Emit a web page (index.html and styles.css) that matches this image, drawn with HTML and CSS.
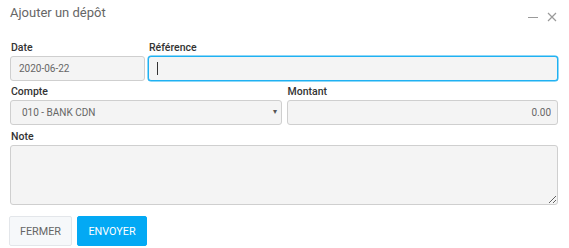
FILE: index.html
```html
<!DOCTYPE html>
<html lang="fr">
<head>
    <meta charset="UTF-8">
    <meta name="viewport" content="width=device-width, initial-scale=1.0">
    <title>Ajouter un dépôt</title>
    <link rel="stylesheet" href="styles.css">
</head>
<body>
    <div class="dialog">
        <div class="dialog-header">
            <h2 class="dialog-title">Ajouter un dépôt</h2>
            <div class="dialog-tools">
                <span class="tool-min"></span>
                <svg class="tool-close" width="10" height="10" viewBox="0 0 10 10">
                    <path d="M1 1L9 9M9 1L1 9" stroke="#9a9a9a" stroke-width="1.2" fill="none"/>
                </svg>
            </div>
        </div>

        <form class="dialog-form">
            <div class="row row-date">
                <div class="field">
                    <label for="date">Date</label>
                    <input type="text" id="date" value="2020-06-22" readonly>
                </div>
                <div class="field">
                    <label for="reference">Référence</label>
                    <div class="input-wrap">
                        <input type="text" id="reference" class="focused">
                        <span class="caret"></span>
                    </div>
                </div>
            </div>
            <div class="row row-half">
                <div class="field">
                    <label for="account">Compte</label>
                    <div class="select-wrap">
                        <select id="account">
                            <option>010 - BANK CDN</option>
                        </select>
                        <span class="select-arrow">&#9662;</span>
                    </div>
                </div>
                <div class="field">
                    <label for="amount">Montant</label>
                    <input type="text" id="amount" class="amount" value="0.00">
                </div>
            </div>
            <div class="field">
                <label for="note">Note</label>
                <textarea id="note"></textarea>
            </div>

            <div class="actions">
                <button type="button" class="btn btn-close">Fermer</button>
                <button type="button" class="btn btn-send">Envoyer</button>
            </div>
        </form>
    </div>
</body>
</html>
```

FILE: styles.css
```css
body {
    margin: 0;
    font-family: Roboto, "Liberation Sans", Arial, sans-serif;
    background: #fff;
}
.dialog {
    padding: 0 11px 0 10px;
}
.dialog-header {
    display: flex;
    justify-content: space-between;
    align-items: flex-start;
    height: 40px;
    padding-top: 3px;
    box-sizing: border-box;
}
.dialog-title {
    margin: 0 0 0 0;
    font-size: 13px;
    font-weight: 400;
    line-height: 20px;
    color: #666;
}
.dialog-tools {
    display: flex;
    align-items: center;
    gap: 9px;
    margin-top: 9px;
    margin-right: 1px;
}
.tool-min {
    display: block;
    width: 10px;
    height: 1px;
    background: #9a9a9a;
}
.tool-close {
    display: block;
}
.row {
    display: grid;
    margin-bottom: 3px;
}
.row-date {
    grid-template-columns: 135px 1fr;
    gap: 3px;
}
.row-half {
    grid-template-columns: 1fr 1fr;
    gap: 5px;
    margin-bottom: 4px;
}
label {
    display: block;
    font-size: 10.5px;
    font-weight: 500;
    line-height: 15px;
    margin-bottom: 1px;
    padding-left: 1px;
    color: #333;
}
input[type="text"],
select,
textarea {
    display: block;
    width: 100%;
    height: 25px;
    box-sizing: border-box;
    margin: 0;
    padding: 0 8px;
    border: 1px solid #cfcfcf;
    border-radius: 3px;
    background: #f4f4f4;
    font-family: Roboto, "Liberation Sans", Arial, sans-serif;
    font-size: 10px;
    color: #666;
    outline: none;
}
input.focused {
    border-color: #1fb1f2;
    box-shadow: 0 0 0 0.5px #1fb1f2;
}
.input-wrap,
.select-wrap {
    position: relative;
}
.caret {
    position: absolute;
    left: 9px;
    top: 6px;
    width: 1px;
    height: 13px;
    background: #333;
}
select {
    appearance: none;
    -webkit-appearance: none;
    padding-left: 11px;
}
.select-arrow {
    position: absolute;
    right: 5px;
    top: 7px;
    font-size: 8px;
    color: #555;
    pointer-events: none;
}
input.amount {
    text-align: right;
    padding-right: 6px;
}
textarea {
    height: 60px;
    resize: vertical;
}
.actions {
    display: flex;
    gap: 5px;
    margin-top: 11px;
    margin-left: -1px;
}
.btn {
    height: 30px;
    border: 1px solid #e3e6ea;
    border-radius: 2px;
    font-family: Roboto, "Liberation Sans", Arial, sans-serif;
    font-size: 10.8px;
    text-transform: uppercase;
    cursor: pointer;
}
.btn-close {
    width: 63px;
    background: #f6f8fa;
    color: #666;
}
.btn-send {
    width: 70px;
    background: #03a9f4;
    border-color: #03a9f4;
    color: #fff;
    font-size: 10.8px;
}
```
